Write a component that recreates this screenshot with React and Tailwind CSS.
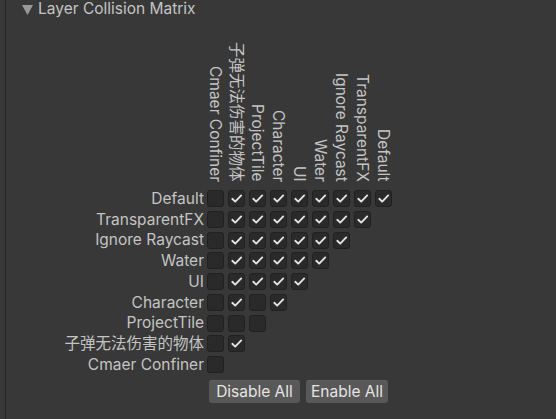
import React from 'react';

const layers = ['Default', 'TransparentFX', 'Ignore Raycast', 'Water', 'UI', 'Character', 'ProjectTile', '子弹无法伤害的物体', 'Cmaer Confiner'];

// rows: Default first, each row has one fewer box; true = checked
const matrix = [
    [false, true, true, true, true, true, true, true, true],
    [false, true, true, true, true, true, true, true],
    [false, true, true, true, true, true, true],
    [false, true, true, true, true, true],
    [false, true, true, true, true],
    [false, true, false, true],
    [false, false, false],
    [false, true],
    [false],
];

function Check({ on }) {
    return (
        <div className="w-[17px] h-[17px] rounded-[3px] bg-[#2a2a2a] border border-[#212121] flex items-center justify-center shrink-0">
            {on && (
                <svg width="17" height="17" viewBox="0 0 17 17" className="-m-px">
                    <path d="M4.3 8.8 L7.2 11.6 L13.2 5.4" fill="none" stroke="#e4e4e4" strokeWidth="1.9" strokeLinecap="round" strokeLinejoin="round" />
                </svg>
            )}
        </div>
    );
}

export default function App() {
    const cols = [...layers].reverse();
    return (
        <div className="w-[556px] h-[419px] bg-[#383838] text-[#c4c4c4] text-[15.5px] flex" style={{ fontFamily: 'Inter, "Noto Sans CJK SC", sans-serif' }}>
            <div className="w-[5px] shrink-0" />
            <div className="w-px bg-[#232323] shrink-0" />
            <div className="flex-1 flex flex-col">
                <div className="h-[20px] flex items-center pl-[16px] gap-[5px]">
                    <svg width="11" height="10" viewBox="0 0 11 10">
                        <path d="M0 0 H11 L5.5 10 Z" fill="#999999" />
                    </svg>
                    <span className="leading-none -mt-[2px]">Layer Collision Matrix</span>
                </div>

                <div className="h-[162px] flex items-end pl-[201px] gap-[4px]">
                    {cols.map((c) => (
                        <div key={c} className="w-[17px] flex justify-center">
                            <span className="leading-[17px] whitespace-nowrap [writing-mode:vertical-rl] [text-orientation:sideways]">{c}</span>
                        </div>
                    ))}
                </div>

                <div className="mt-[8px] flex flex-col gap-[3.75px]">
                    {layers.map((l, i) => (
                        <div key={l} className="flex items-center h-[17px]">
                            <div className="w-[198px] text-right whitespace-nowrap leading-none">{l}</div>
                            <div className="ml-[3px] flex gap-[4px]">
                                {matrix[i].map((on, j) => (
                                    <Check key={j} on={on} />
                                ))}
                            </div>
                        </div>
                    ))}
                </div>

                <div className="mt-[7px] ml-[203px] flex gap-[6px]">
                    <button className="w-[91px] h-[23px] rounded-[3px] bg-[#585858] text-[#e4e4e4] text-[15.5px] leading-none border-t border-[#606060]">Disable All</button>
                    <button className="w-[82px] h-[23px] rounded-[3px] bg-[#585858] text-[#e4e4e4] text-[15.5px] leading-none border-t border-[#606060]">Enable All</button>
                </div>
            </div>
        </div>
    );
}
